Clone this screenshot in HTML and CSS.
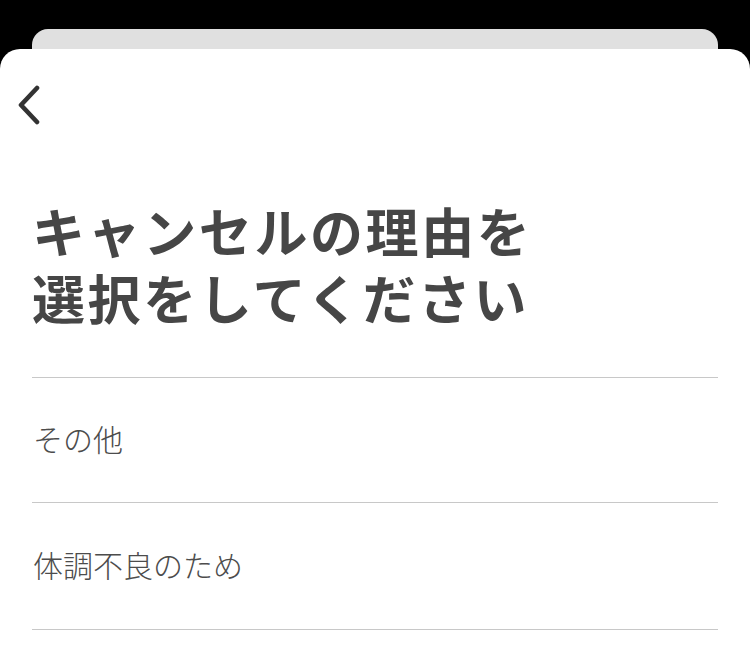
FILE: index.html
```html
<!DOCTYPE html>
<html lang="ja">
<head>
<meta charset="utf-8">
<link rel="stylesheet" href="styles.css">
</head>
<body>
<div class="screen">
  <div class="back-card"></div>
  <div class="sheet">
    <div class="header">
      <button class="back" aria-label="戻る">
        <svg width="26" height="40" viewBox="0 0 26 40"><path d="M21 3 L5 20 L21 37" fill="none" stroke="#333" stroke-width="4.6" stroke-linecap="round" stroke-linejoin="round"/></svg>
      </button>
    </div>
    <h1 class="title"><span class="line">キャンセルの理由を</span><span class="line">選択をしてください</span></h1>
    <ul class="reasons">
      <li class="reason">その他</li>
      <li class="reason">体調不良のため</li>
    </ul>
  </div>
</div>
</body>
</html>
```
FILE: styles.css
```css
html, body {
  margin: 0;
  padding: 0;
  background: #000;
}
body {
  font-family: "Noto Sans CJK JP", "Noto Sans", sans-serif;
  width: 750px;
  height: 664px;
  overflow: hidden;
}
.screen {
  display: flex;
  flex-direction: column;
  height: 664px;
}
.back-card {
  margin: 29px 32px 0;
  height: 20px;
  background: #e0e0e0;
  border-radius: 16px 16px 0 0;
  flex: none;
}
.sheet {
  flex: 1;
  background: #fff;
  border-radius: 20px 20px 0 0;
  display: flex;
  flex-direction: column;
}
.header {
  height: 110px;
  padding: 36px 0 0 16px;
  box-sizing: border-box;
}
.back {
  border: 0;
  background: none;
  padding: 0;
  display: block;
  width: 26px;
  height: 40px;
}
.back svg { display: block; }
.title {
  margin: 38px 32px 0;
  font-size: 53px;
  font-weight: 700;
  color: #464646;
  letter-spacing: 2.6px;
}
.title .line {
  display: block;
  height: 67px;
  line-height: 67px;
}
.reasons {
  list-style: none;
  margin: 46px 32px 0;
  padding: 0;
}
.reason {
  border-top: 1px solid #c8c8c8;
  height: 125px;
  box-sizing: border-box;
  padding: 0 0 5px 1px;
  display: flex;
  align-items: center;
  font-size: 30px;
  font-weight: 300;
  color: #4c4c4c;
}
.reason:last-child {
  border-bottom: 1px solid #c8c8c8;
  height: 128px;
}
```
